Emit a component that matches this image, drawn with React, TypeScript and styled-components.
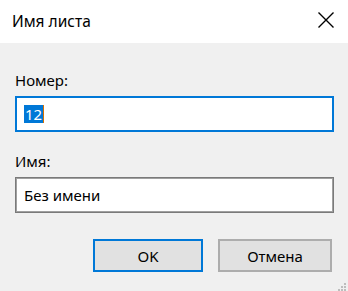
import React from "react";
import styled, { createGlobalStyle } from "styled-components";

const Global = createGlobalStyle`
  html, body {
    margin: 0;
    padding: 0;
    background: #f0f0f0;
  }
  * {
    box-sizing: border-box;
  }
`;

const Window = styled.div`
  position: relative;
  width: 348px;
  height: 291px;
  display: flex;
  flex-direction: column;
  background: #f0f0f0;
  font-family: "Noto Sans", "Open Sans", sans-serif;
  font-size: 15px;
  color: #000;
  overflow: hidden;
`;

const TitleBar = styled.div`
  height: 43px;
  flex: none;
  display: flex;
  align-items: center;
  justify-content: space-between;
  padding: 0 14px 0 12px;
  background: #fff;
`;

const Title = styled.div`
  font-size: 15.5px;
  line-height: 20px;
  margin-top: -1px;
`;

const CloseButton = styled.div`
  width: 16px;
  height: 16px;
  display: flex;
  margin-top: -4px;
`;

const Body = styled.div`
  flex: 1;
  display: flex;
  flex-direction: column;
  padding: 27px 14px 0 15px;
`;

const Label = styled.div<{ $gap: number }>`
  line-height: 20px;
  margin-top: ${(p) => p.$gap}px;
  margin-bottom: 6px;
`;

const Field = styled.div<{ $focused?: boolean }>`
  height: 36px;
  display: flex;
  align-items: center;
  padding: 0 8px;
  background: #fff;
  border: 2px solid ${(p) => (p.$focused ? "#0078d7" : "#7a7a7a")};
  ${(p) => (p.$focused ? "" : "border-width: 1px; box-shadow: inset 0 0 0 1px #a0a0a0;")}
  line-height: 18px;
`;

const Selected = styled.span`
  background: #0078d7;
  color: #fff;
  padding: 0 1px 0 1px;
  margin-left: -1px;
  border-right: 1px solid #d87000;
`;

const Buttons = styled.div`
  display: flex;
  justify-content: flex-end;
  gap: 15px;
  margin-top: 26px;
  padding-right: 2px;
`;

const Button = styled.div<{ $primary?: boolean }>`
  width: ${(p) => (p.$primary ? 110 : 114)}px;
  height: 33px;
  display: flex;
  align-items: center;
  justify-content: center;
  background: #e1e1e1;
  border: ${(p) => (p.$primary ? "2px solid #0078d7" : "2px solid #adadad")};
  line-height: 20px;
`;

const Grip = styled.svg`
  position: absolute;
  right: 2px;
  bottom: 0px;
`;

export default function App() {
  return (
    <>
      <Global />
      <Window>
        <TitleBar>
          <Title>Имя листа</Title>
          <CloseButton>
            <svg width="16" height="16" viewBox="0 0 16 16">
              <path d="M0.5 0.5 L15.5 15.5 M15.5 0.5 L0.5 15.5" stroke="#000" strokeWidth="1.4" fill="none" />
            </svg>
          </CloseButton>
        </TitleBar>
        <Body>
          <Label $gap={0}>Номер:</Label>
          <Field $focused>
            <Selected>12</Selected>
          </Field>
          <Label $gap={19}>Имя:</Label>
          <Field>Без имени</Field>
          <Buttons>
            <Button $primary>OK</Button>
            <Button>Отмена</Button>
          </Buttons>
        </Body>
        <Grip width="8" height="8" viewBox="0 0 8 8">
          <rect x="6" y="0" width="2" height="2" fill="#bdbdbd" />
          <rect x="3" y="3" width="2" height="2" fill="#bdbdbd" />
          <rect x="6" y="3" width="2" height="2" fill="#bdbdbd" />
          <rect x="0" y="6" width="2" height="2" fill="#bdbdbd" />
          <rect x="3" y="6" width="2" height="2" fill="#bdbdbd" />
          <rect x="6" y="6" width="2" height="2" fill="#bdbdbd" />
        </Grip>
      </Window>
    </>
  );
}
